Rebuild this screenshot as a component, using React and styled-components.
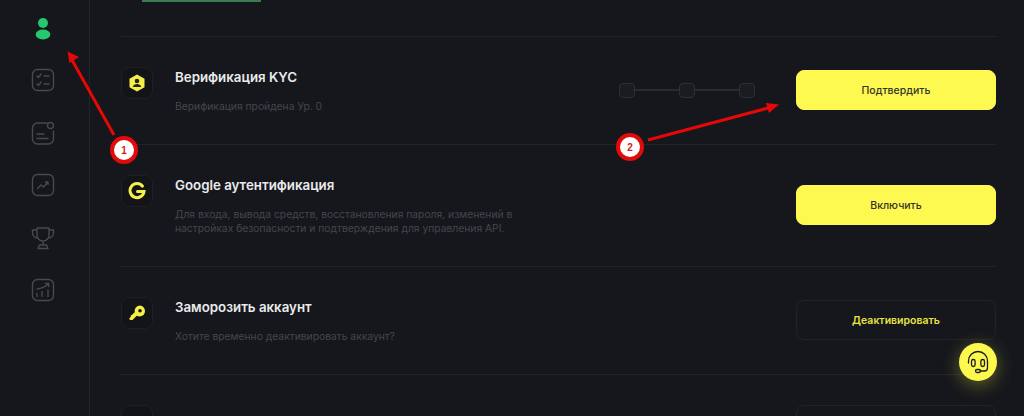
import React from "react";
import styled, { createGlobalStyle } from "styled-components";

const Global = createGlobalStyle`
  html, body { margin: 0; height: 416px; overflow: hidden; background: #15171c; }
  * { box-sizing: border-box; }
  #root { height: 416px; font-family: Inter, "Noto Sans", sans-serif; }
`;
const Page = styled.div`
  position: relative; display: flex; width: 1024px; height: 416px; overflow: hidden; background: #15171c;
`;
const Sidebar = styled.nav`
  flex: 0 0 90px; height: 100%; border-right: 1px solid #222429;
  display: flex; flex-direction: column; align-items: center; gap: 28.4px; padding: 16px 3px 0 0;
`;
const NavIcon = styled.svg`
  width: 24px; height: 24px; display: block; fill: none; stroke: #47494e; stroke-width: 1.4;
  stroke-linecap: round; stroke-linejoin: round;
`;
const Main = styled.main`
  flex: 1; padding: 0 28px 0 31px; min-width: 0;
`;
const TabBar = styled.div`
  height: 37px; border-bottom: 1px solid #222429; padding-left: 21px;
`;
const TabLine = styled.div`
  width: 119px; height: 2px; background: #3c7a50;
`;
const Row = styled.section`
  display: flex; justify-content: space-between; align-items: ${p => p.$top ? "flex-start" : "center"};
  padding: 30px 0; border-bottom: 1px solid #222429;
`;
const Left = styled.div`
  display: flex; gap: 22px; align-items: flex-start;
`;
const IconBox = styled.div`
  width: 32px; height: 32px; border-radius: 8px; border: 1px solid #1d1f25; background: #121418;
  display: flex; align-items: center; justify-content: center; flex: none;
`;
const YellowIcon = styled.svg`
  width: 20px; height: 20px; display: block;
`;
const Text = styled.div`
  display: flex; flex-direction: column; gap: 12px; min-height: 47px;
`;
const Title = styled.h3`
  margin: 0; font-size: 13.3px; line-height: 20px; font-weight: 600; color: #e9eaeb;
`;
const Sub = styled.p`
  margin: 0; padding-bottom: 1px; width: 345px; font-size: 10.3px; line-height: 14px; font-weight: 400; color: #44464c;
`;
const Right = styled.div`
  display: flex; align-items: center; gap: 41px;
`;
const Steps = styled.div`
  display: flex; align-items: center; margin-bottom: 1px;
`;
const Step = styled.span`
  width: 16px; height: 15px; border: 1.5px solid #2d2f35; border-radius: 4px; background: #1a1c21;
`;
const StepLine = styled.span`
  width: 44px; height: 2px; background: #292b30;
`;
const Btn = styled.button`
  width: 200px; height: 40px; border-radius: 8px; font-family: inherit; font-size: 10.5px; margin: 0 0 1px;
  font-weight: ${p => p.$outline ? 600 : 500};
  border: 1px solid ${p => p.$outline ? "#212329" : "#fdf950"};
  background: ${p => p.$outline ? "transparent" : "#fdf950"};
  color: ${p => p.$outline ? "#e8e442" : "#33342a"};
`;
const Chat = styled.div`
  position: absolute; left: 959px; top: 343px; width: 38px; height: 38px; border-radius: 50%;
  background: #fdf84e; box-shadow: 0 4px 18px rgba(240,235,70,.36);
  display: flex; align-items: center; justify-content: center;
`;
const ChatIcon = styled.svg`
  width: 26px; height: 26px; fill: none; stroke: #1c1d1c; stroke-width: 1.3; stroke-linecap: round; stroke-linejoin: round;
`;
const Arrows = styled.svg`
  position: absolute; inset: 0; width: 1024px; height: 416px; pointer-events: none;
`;
const Badge = styled.div`
  position: absolute; left: ${p => p.$x - 14}px; top: ${p => p.$y - 14}px; width: 28px; height: 28px;
  border-radius: 50%; background: #fff; border: 4px solid #e20a0a; color: #d91a1a;
  display: flex; align-items: center; justify-content: center;
  font-size: 10px; font-weight: 700; font-family: "Liberation Sans", sans-serif;
`;

const User = () => (
  <NavIcon viewBox="0 0 24 24" style={{ stroke: "none", fill: "#25c76f" }}>
    <circle cx="12" cy="7" r="5" />
    <ellipse cx="12" cy="18.5" rx="7.3" ry="5" />
  </NavIcon>
);
const Tasks = () => (
  <NavIcon viewBox="0 0 24 24">
    <rect x="1.5" y="1.5" width="21" height="21" rx="5" />
    <path d="M6 8l1.5 1.5L10 6M13 8h5M6 16l1.5 1.5L10 14M13 16h5" />
  </NavIcon>
);
const Note = () => (
  <NavIcon viewBox="0 0 24 24">
    <path d="M16 2H6.5a5 5 0 0 0-5 5v11a5 5 0 0 0 5 5h11a5 5 0 0 0 5-5V10" />
    <circle cx="19.5" cy="4.5" r="3" />
    <path d="M6 13h7M6 17.5h11" />
  </NavIcon>
);
const Chart = () => (
  <NavIcon viewBox="0 0 24 24">
    <rect x="1.5" y="1.5" width="21" height="21" rx="5" />
    <path d="M6.5 15.5l3.5-3.5 2.5 2 4.5-5M14.5 9H17v2.5" />
  </NavIcon>
);
const Trophy = () => (
  <NavIcon viewBox="0 0 24 24">
    <path d="M6 2h12v7a6 6 0 0 1-12 0V2zM6 4H1.5v3A5 5 0 0 0 7 12M18 4h4.5v3A5 5 0 0 1 17 12M12 15v4M8.5 19h7l1.5 3.5H7z" />
  </NavIcon>
);
const Growth = () => (
  <NavIcon viewBox="0 0 24 24">
    <rect x="1.5" y="1.5" width="21" height="21" rx="5" />
    <path d="M6 11c4.500-.5 8-2 11.500-5M14.500 5.500h3.200v3M6 18.500v-3M11 18.500v-5M17 18.500v-6.500" />
  </NavIcon>
);
const Shield = () => (
  <YellowIcon viewBox="0 0 20 20">
    <path fill="#f5f048" d="M10 1.500l7.500 4.200v8.600L10 18.500l-7.500-4.200V5.700z" />
    <circle cx="10" cy="8" r="2.300" fill="#23241c" />
    <path fill="#23241c" d="M5.800 14c.5-2.200 2.200-3 4.200-3s3.700.8 4.200 3z" />
  </YellowIcon>
);
const GIcon = () => (
  <YellowIcon viewBox="0 0 20 20">
    <path fill="none" stroke="#f5f048" strokeWidth="3" strokeLinecap="round" d="M15.500 5.200A7 7 0 1 0 17 10.500H10.500" />
  </YellowIcon>
);
const Key = () => (
  <YellowIcon viewBox="0 0 20 20">
    <path fill="#f5f048" fillRule="evenodd" d="M12.500 2.500a5.500 5.500 0 1 1-2.800 10.200L5.500 17H3l-.8-1.500L4 13.500l-.5-1 1.500-.5.800-1 2-1.800a5.500 5.500 0 0 1 4.700-6.700zM13 6a1.800 1.800 0 1 0 0 3.600A1.800 1.800 0 0 0 13 6z" />
  </YellowIcon>
);

export default function App() {
  return (
    <Page>
      <Global />
      <Sidebar>
        <User /><Tasks /><Note /><Chart /><Trophy /><Growth />
      </Sidebar>
      <Main>
        <TabBar><TabLine /></TabBar>
        <Row>
          <Left>
            <IconBox><Shield /></IconBox>
            <Text>
              <Title>Верификация KYC</Title>
              <Sub>Верификация пройдена Ур. 0</Sub>
            </Text>
          </Left>
          <Right>
            <Steps>
              <Step /><StepLine /><Step /><StepLine /><Step />
            </Steps>
            <Btn>Подтвердить</Btn>
          </Right>
        </Row>
        <Row>
          <Left>
            <IconBox><GIcon /></IconBox>
            <Text>
              <Title>Google аутентификация</Title>
              <Sub>Для входа, вывода средств, восстановления пароля, изменений в настройках безопасности и подтверждения для управления API.</Sub>
            </Text>
          </Left>
          <Btn>Включить</Btn>
        </Row>
        <Row>
          <Left>
            <IconBox><Key /></IconBox>
            <Text>
              <Title>Заморозить аккаунт</Title>
              <Sub>Хотите временно деактивировать аккаунт?</Sub>
            </Text>
          </Left>
          <Btn $outline>Деактивировать</Btn>
        </Row>
        <Row $top>
          <Left><IconBox /></Left>
          <Btn $outline />
        </Row>
      </Main>
      <Chat>
        <ChatIcon viewBox="0 0 26 26">
          <path d="M3.500 14v-2a9.500 9.500 0 0 1 19 0v2" />
          <rect x="6.500" y="10.500" width="3.600" height="7" rx="1.800" />
          <rect x="15.900" y="10.500" width="3.600" height="7" rx="1.800" />
          <path d="M22.500 14v5a3 3 0 0 1-3 3H15" />
          <rect x="10.500" y="20.500" width="5" height="3" rx="1.500" />
        </ChatIcon>
      </Chat>
      <Arrows viewBox="0 0 1024 416">
        <path d="M114 135L72 60" stroke="#e60808" strokeWidth="3" fill="none" />
        <path d="M67.500 51.500L79 57L69.500 63z" fill="#e60808" />
        <path d="M648 140L770 107.500" stroke="#e60808" strokeWidth="3" fill="none" />
        <path d="M779 104.500L769 113L766 103z" fill="#e60808" />
      </Arrows>
      <Badge $x={124} $y={150}>1</Badge>
      <Badge $x={630} $y={147}>2</Badge>
    </Page>
  );
}
